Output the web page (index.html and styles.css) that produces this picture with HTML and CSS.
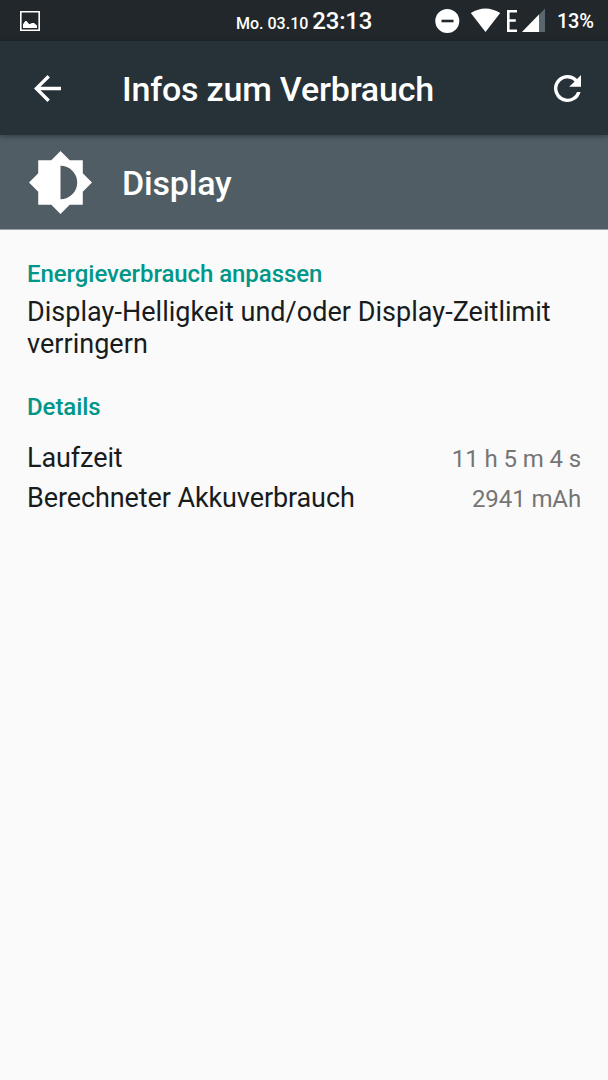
FILE: index.html
```html
<!DOCTYPE html>
<html lang="de">
<head>
<meta charset="utf-8">
<title>Infos zum Verbrauch</title>
<link rel="stylesheet" href="styles.css">
</head>
<body>
<header class="status">
  <svg class="shot" viewBox="0 0 20 20"><path fill="none" stroke="#fff" stroke-width="1.600" d="M.8.8h18.400v18.400H.8z"/><path fill="#fff" d="M3 17v-3.800l2.300-3.200h1.200l2.800 3.200 2.700-1.200h2l3 2.500V17z"/></svg>
  <div class="clock"><span class="date">Mo. 03.10</span><span class="time">23:13</span></div>
  <svg class="signals" viewBox="0 0 112 26"><circle cx="13.300" cy="13" r="12" fill="#fff"/><path d="M7.500 11.700h12v2.600h-12z" fill="#21272b"/><path fill="#fff" d="M36.800 5q14.700-9 29.400 0L51.500 24z"/><path fill="none" stroke="#fff" stroke-width="2.600" d="M83 3.300h-8.700v19.400H83M74.300 12.500h7.500"/><path fill="#59666d" d="M88 24L111 .500V24z"/><path fill="#fff" d="M88 24L105 6.600V24z"/></svg>
  <span class="battery">13%</span>
</header>
<nav class="toolbar">
  <svg class="back" viewBox="4 4 16 16"><path fill="#fff" d="M20 11H7.830l5.590-5.590L12 4l-8 8 8 8 1.410-1.410L7.830 13H20v-2z"/></svg>
  <h1 class="title">Infos zum Verbrauch</h1>
  <svg class="refresh" viewBox="4 4 16 16"><path fill="#fff" d="M17.650 6.350A7.958 7.958 0 0 0 12 4a8 8 0 1 0 7.730 10h-2.080A6 6 0 1 1 12 6c1.660 0 3.140.690 4.220 1.780L13 11h7V4l-2.350 2.350z"/></svg>
</nav>
<section class="subject">
  <svg class="bright" viewBox="0.690 0.690 22.620 22.620"><path fill="#fff" d="M20 15.310L23.310 12 20 8.690V4h-4.690L12 .690 8.690 4H4v4.690L.690 12 4 15.310V20h4.690L12 23.310 15.310 20H20z"/><path fill="#505d64" d="M12 18V6a6 6 0 0 1 0 12z"/></svg>
  <h2 class="title">Display</h2>
</section>
<main class="content">
  <h3 class="section">Energieverbrauch anpassen</h3>
  <p class="advice">Display-Helligkeit und/oder Display-Zeitlimit verringern</p>
  <h3 class="section details">Details</h3>
  <dl class="rows">
    <div class="row"><dt>Laufzeit</dt><dd>11 h 5 m 4 s</dd></div>
    <div class="row"><dt>Berechneter Akkuverbrauch</dt><dd>2941 mAh</dd></div>
  </dl>
</main>
</body>
</html>
```
FILE: styles.css
```css
* { box-sizing: border-box; margin: 0; padding: 0; }
body { height: 1080px; overflow: hidden; background: #fafafa; color: #191c1d; font-family: Roboto, sans-serif; }
svg { display: block; flex: none; }
.status { display: grid; grid-template-columns: 216px 176px 120px 1fr; align-items: center; height: 41px; padding-left: 20px; background: #21272b; color: #fff; }
.shot { width: 20px; height: 20px; }
.clock { display: flex; align-items: baseline; gap: 4px; font-weight: 500; white-space: nowrap; }
.date { font-size: 16px; }
.time { font-size: 24px; letter-spacing: -.2px; }
.signals { width: 112px; height: 26px; margin-left: 22px; }
.battery { margin-left: 25px; font-size: 20px; font-weight: 500; letter-spacing: -.3px; }
.toolbar { position: relative; display: flex; align-items: center; height: 94px; padding: 0 27px 0 34px; background: #263238; color: #fff; box-shadow: 0 1px 5px rgba(0,0,0,.4); }
.back { width: 27px; height: 27px; margin-right: 61px; }
.title { padding-top: 1px; font-size: 34px; font-weight: 500; line-height: 40px; letter-spacing: -.2px; white-space: nowrap; }
.toolbar .title { flex: 1; }
.refresh { width: 27px; height: 27px; }
.subject { display: flex; align-items: center; gap: 30px; height: 95px; padding-left: 29px; background: #505d64; color: #fff; border-bottom: 1px solid #9aa1a4; }
.bright { width: 63px; height: 63px; }
.content { padding: 28px 27px; }
.section { font-size: 24px; line-height: 32px; font-weight: 500; letter-spacing: -.06px; color: #009688; }
.advice { padding-top: 6px; font-size: 27px; line-height: 32px; letter-spacing: .03px; }
.details { padding-top: 31px; }
.rows { padding-top: 15px; }
.row { display: flex; justify-content: space-between; align-items: baseline; height: 40px; font-size: 27px; line-height: 40px; letter-spacing: -.1px; }
.row dd { font-size: 24px; color: #757575; }
```
